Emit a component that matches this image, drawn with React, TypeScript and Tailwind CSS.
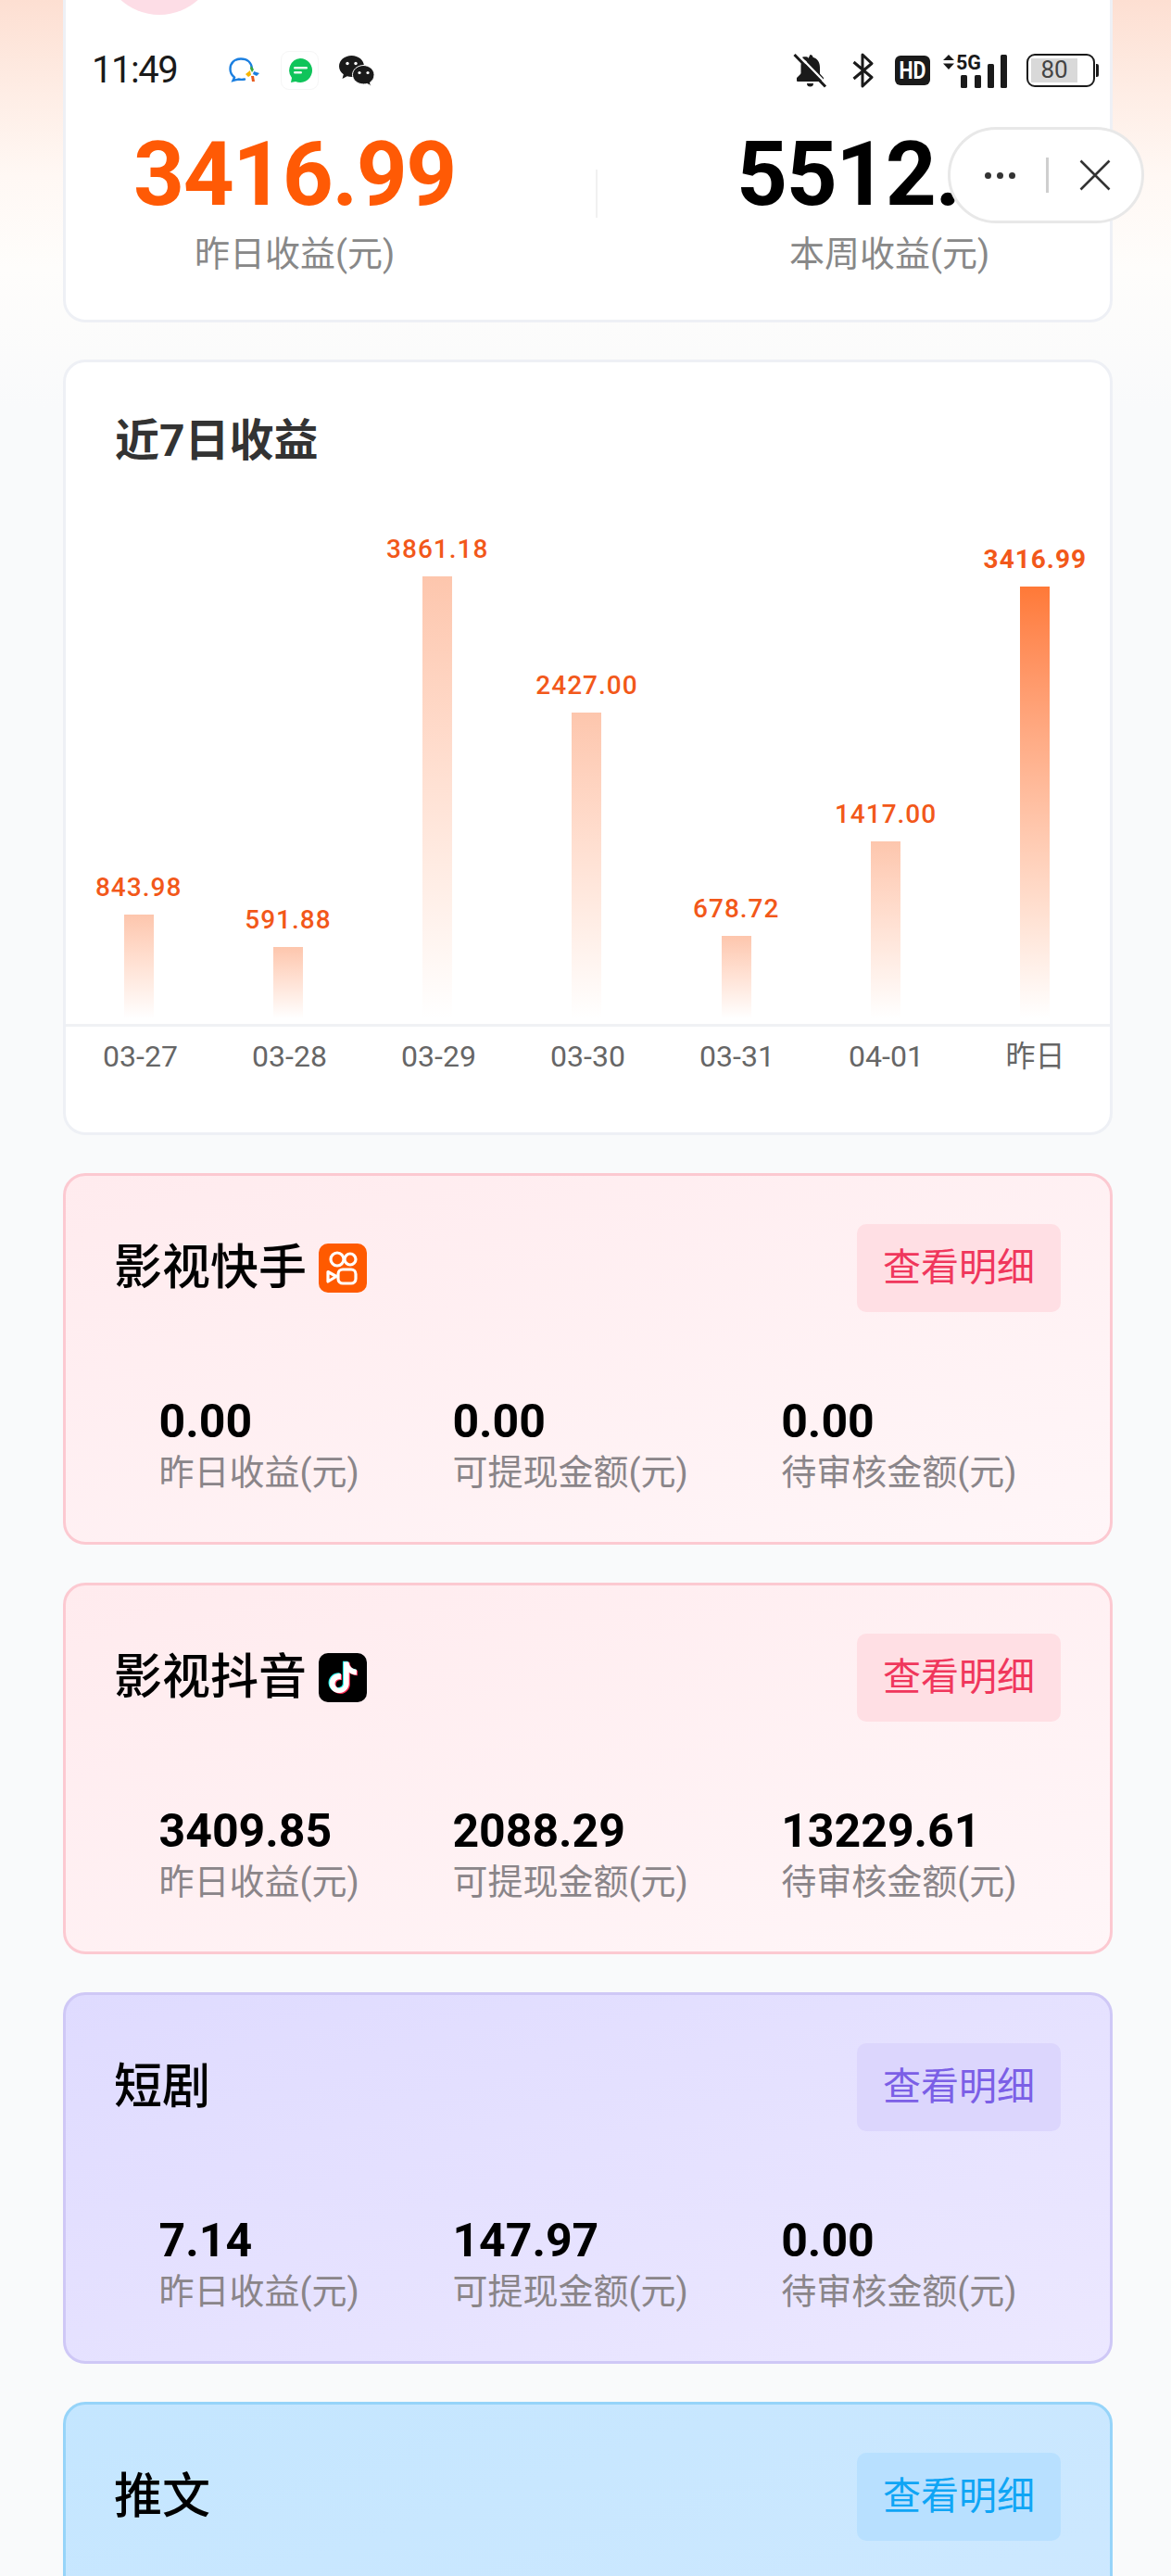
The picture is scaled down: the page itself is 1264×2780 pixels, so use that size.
const bars = [
  { value: "843.98", day: "03-27", height: 112 },
  { value: "591.88", day: "03-28", height: 77 },
  { value: "3861.18", day: "03-29", height: 477 },
  { value: "2427.00", day: "03-30", height: 330 },
  { value: "678.72", day: "03-31", height: 89 },
  { value: "1417.00", day: "04-01", height: 191 },
  { value: "3416.99", day: "昨日", height: 466, active: true },
];

const TIKTOK_PATH =
  "M12.525.02c1.31-.02 2.61-.01 3.91-.02.08 1.53.63 3.09 1.75 4.17 1.12 1.11 2.7 1.62 4.24 1.79v4.03c-1.44-.05-2.89-.35-4.2-.97-.57-.26-1.1-.59-1.62-.93-.01 2.92.01 5.84-.02 8.75-.08 1.4-.54 2.79-1.35 3.94-1.31 1.92-3.58 3.17-5.91 3.21-1.43.08-2.86-.31-4.08-1.03-2.02-1.19-3.44-3.37-3.65-5.71-.02-.5-.03-1-.01-1.49.18-1.9 1.12-3.72 2.58-4.96 1.66-1.44 3.98-2.13 6.15-1.72.02 1.48-.04 2.96-.04 4.44-.99-.32-2.15-.23-3.02.37-.63.41-1.11 1.04-1.36 1.75-.21.51-.15 1.07-.14 1.61.24 1.64 1.82 3.02 3.5 2.87 1.12-.01 2.19-.66 2.77-1.61.19-.33.4-.67.41-1.06.1-1.79.06-3.57.07-5.36.01-4.03-.01-8.05.02-12.07z";

function KuaishouIcon() {
  return (
    <svg width="52" height="53" viewBox="0 0 52 53" className="shrink-0">
      <rect width="52" height="53" rx="10" fill="#ff5a00" />
      <g fill="none" stroke="#fff" strokeWidth="3.2" strokeLinejoin="round">
        <circle cx="20" cy="17" r="7" />
        <circle cx="34" cy="17" r="6" />
        <rect x="21" y="28" width="19" height="15" rx="5" />
        <path d="M10 30.500 19 35.500 10 41Z" />
      </g>
    </svg>
  );
}

function TiktokIcon() {
  return (
    <svg width="52" height="53" viewBox="0 0 52 53" className="shrink-0">
      <rect width="52" height="53" rx="10" fill="#000" />
      <g transform="translate(9.500 9.500) scale(1.4)">
        <path d={TIKTOK_PATH} fill="#25f4ee" transform="translate(-0.8 -0.5)" />
        <path d={TIKTOK_PATH} fill="#fe2c55" transform="translate(0.8 0.6)" />
        <path d={TIKTOK_PATH} fill="#fff" />
      </g>
    </svg>
  );
}

function WecomIcon() {
  return (
    <svg width="34" height="28" viewBox="0 0 34 28" className="shrink-0">
      <path
        d="M25 12C24.500 5.500 20 1.500 13 1.500S1.500 6 1.500 12.500C1.500 16.500 3.500 19.500 6 21.500L4.500 25 10.500 23.500C12.500 24 15 24 17 23.500"
        fill="none"
        stroke="#1b7fe0"
        strokeWidth="2.4"
        strokeLinecap="round"
      />
      <path d="M18 18 23 14 24 19 21 21Z" fill="#f7b500" />
      <path d="M24 9 27 13 25 16 23 12Z" fill="#3aa93a" />
      <path d="M27 15 33 17 30 20 26 18Z" fill="#1b7fe0" />
      <path d="M24 20 27 20 28 26 25 26Z" fill="#e8591c" />
    </svg>
  );
}

function GreenChatIcon() {
  return (
    <div className="w-[41px] h-[42px] rounded-[9px] border border-[#f6f6f6] flex items-center justify-center shrink-0">
      <svg width="30" height="30" viewBox="0 0 30 30">
        <path d="M15 2a13 13 0 1 1-5 25l-5 1 1-5A13 13 0 0 1 15 2Z" fill="#0fc45a" />
        <rect x="8" y="11" width="15" height="2.400" rx="1.200" fill="#fff" opacity="0.9" />
        <rect x="8" y="16" width="9" height="2.400" rx="1.200" fill="#fff" opacity="0.9" />
      </svg>
    </div>
  );
}

function WechatIcon() {
  return (
    <svg width="39" height="33" viewBox="0 0 39 33" className="shrink-0">
      <path d="M13.500 0C6 0 0 5 0 11.500c0 3.600 1.900 6.700 4.800 8.800L3.500 25l5.200-2.700c1.500.4 3.100.6 4.800.6 7.500 0 13.500-5 13.500-11.400S21 0 13.500 0Z" fill="#1a1a1a" />
      <circle cx="9" cy="8.500" r="1.700" fill="#fff" />
      <circle cx="18" cy="8.500" r="1.700" fill="#fff" />
      <path d="M26.500 10.500C20 10.500 14.500 15 14.500 20.700s5.500 10.200 12 10.200c1.300 0 2.600-.2 3.800-.5l4.200 2.300-1-3.800c2.900-1.900 4.500-4.800 4.500-8.200 0-5.700-5.500-10.200-12-10.200Z" fill="#1a1a1a" stroke="#fff" strokeWidth="1" />
      <circle cx="22" cy="18.500" r="1.600" fill="#fff" />
      <circle cx="31" cy="18.500" r="1.600" fill="#fff" />
    </svg>
  );
}

function BellOffIcon() {
  return (
    <svg width="37" height="38" viewBox="0 0 37 38" className="shrink-0">
      <path d="M18.500 2c1.700 0 3 1.200 3 2.800 5 1.500 7.500 5.700 7.500 11v6.700l4 4.500v3H4v-3l4.500-4.500V14c0-1 .1-2 .4-3L29 31H4Z" fill="#1a1a1a" />
      <path d="M9 5.500C10.500 4.500 12 4 15.500 4.500L29 19" fill="#1a1a1a" />
      <path d="M15 33h7a3.500 3.500 0 0 1-7 0Z" fill="#1a1a1a" />
      <path d="M5 1.500 37 34.500" stroke="#fff" strokeWidth="2.500" />
      <path d="M1.500 2 35 36.500" stroke="#1a1a1a" strokeWidth="3" />
    </svg>
  );
}

function BluetoothIcon() {
  return (
    <svg width="24" height="38" viewBox="0 0 24 38" className="shrink-0">
      <path d="M1.500 10 21 26.500 11 36V2l10 9.500L1.500 28" fill="none" stroke="#1a1a1a" strokeWidth="3" strokeLinejoin="round" />
    </svg>
  );
}

function HdIcon() {
  return (
    <svg width="38" height="32" viewBox="0 0 38 32" className="shrink-0">
      <rect width="38" height="32" rx="6" fill="#1a1a1a" />
      <text x="4.500" y="25" fontSize="25" fontWeight="700" fill="#fff" fontFamily="Roboto" textLength="29" lengthAdjust="spacingAndGlyphs">
        HD
      </text>
    </svg>
  );
}

function SignalIcon() {
  return (
    <svg width="70" height="37" viewBox="0 0 70 37" className="shrink-0">
      <path d="M6 1 12 7H0ZM6 17 0 10.500H12Z" fill="#1a1a1a" />
      <text x="14" y="17" fontSize="22" fontWeight="700" fill="#1a1a1a" fontFamily="Roboto" textLength="27" lengthAdjust="spacingAndGlyphs">
        5G
      </text>
      <rect x="19" y="23" width="7" height="14" rx="1.500" fill="#1a1a1a" />
      <rect x="34" y="23" width="7" height="14" rx="1.500" fill="#1a1a1a" />
      <rect x="48" y="11" width="7" height="26" rx="1.500" fill="#1a1a1a" />
      <rect x="62" y="1" width="7" height="36" rx="1.500" fill="#1a1a1a" />
    </svg>
  );
}

function Battery() {
  return (
    <div className="flex items-center shrink-0">
      <div className="w-[74px] h-[36px] rounded-[9px] border-[2.5px] border-[#1a1a1a] p-[3px]">
        <div className="w-[50px] h-full bg-[#d9d9d9] text-center text-[#444] text-[26px] leading-[25px]">80</div>
      </div>
      <div className="ml-[1px] w-[3px] h-[14px] rounded-r-[2px] bg-[#1a1a1a]" />
    </div>
  );
}

function StatusBar() {
  return (
    <div className="absolute left-0 top-[51px] w-full h-[50px] pl-[99px] pr-[78px] flex items-center justify-between">
      <div className="flex items-center">
        <span className="w-[94px] text-[40px] leading-[50px] text-[#1a1a1a] tracking-[-1.5px]">11:49</span>
        <div className="ml-[54px] flex items-center gap-[22px]">
          <WecomIcon />
          <GreenChatIcon />
          <WechatIcon />
        </div>
      </div>
      <div className="flex items-center">
        <BellOffIcon />
        <div className="ml-[27px]">
          <BluetoothIcon />
        </div>
        <div className="ml-[22px]">
          <HdIcon />
        </div>
        <div className="ml-[14px]">
          <SignalIcon />
        </div>
        <div className="ml-[20px]">
          <Battery />
        </div>
      </div>
    </div>
  );
}

function Capsule() {
  return (
    <div className="absolute left-[1023px] top-[137px] w-[212px] h-[104px] rounded-full bg-white border-[3px] border-[#e8e8e8] flex items-center">
      <div className="w-[103px] flex justify-center gap-[6px] pl-[4px]">
        <span className="w-[7px] h-[7px] rounded-full bg-[#333]" />
        <span className="w-[7px] h-[7px] rounded-full bg-[#333]" />
        <span className="w-[7px] h-[7px] rounded-full bg-[#333]" />
      </div>
      <div className="w-[3px] h-[38px] bg-[#cfcfcf]" />
      <div className="flex-1 flex justify-center">
        <svg width="34" height="34" viewBox="0 0 34 34">
          <path d="M1.500 1.500 32.500 32.500M32.500 1.500 1.500 32.500" stroke="#333" strokeWidth="2.500" />
        </svg>
      </div>
    </div>
  );
}

function SummaryCard() {
  return (
    <section className="-mt-[140px] h-[488px] rounded-[24px] border-[3px] border-[#eef0f5] bg-white pt-[29px]">
      <div className="ml-[39px] w-[124px] h-[124px] rounded-full bg-[#fddde6]" />
      <div className="mt-[124px] ml-[47px] flex items-start">
        <div className="w-[400px] text-center">
          <div className="text-[96px] leading-[96px] font-bold tracking-[-1.5px] text-[#ff5a05]">3416.99</div>
          <div className="mt-[13px] text-[38px] leading-[50px] text-[#888]">昨日收益(元)</div>
        </div>
        <div className="ml-[125px] mt-[43px] w-[2px] h-[52px] bg-[#f1f1f1]" />
        <div className="ml-[115px] w-[400px] text-center">
          {/* last digits sit under the capsule */}
          <div className="pl-[18px] text-[96px] leading-[96px] font-bold tracking-[-1.5px] text-black">5512.77</div>
          <div className="mt-[13px] text-[38px] leading-[50px] text-[#888]">本周收益(元)</div>
        </div>
      </div>
    </section>
  );
}

function ChartCard() {
  return (
    <section className="mt-[40px] h-[837px] rounded-[24px] border-[3px] border-[#eef0f5] bg-white">
      <h2 className="mt-[55px] ml-[53px] text-[48px] leading-[60px] font-bold text-[#333]">近7日收益</h2>
      <div className="mt-[83px] -ml-[2px] h-[510px] flex items-end">
        {bars.map((b) => (
          <div key={b.day} className="flex-1 flex flex-col items-center">
            <span className={`mb-[12px] text-[28px] leading-[34px] tracking-[1px] text-[#f2581a] ${b.active ? "font-bold" : "font-medium"}`}>
              {b.value}
            </span>
            <div
              className={`w-[32px] bg-gradient-to-b ${b.active ? "from-[#ff7937]" : "from-[#fdc6ad]"} to-white`}
              style={{ height: b.height }}
            />
          </div>
        ))}
      </div>
      <div className="mt-[6px] border-t-[3px] border-[#f0f1f4] flex">
        {bars.map((b) => (
          <div key={b.day} className="flex-1 text-center text-[32px] leading-[64px] text-[#666]">
            {b.day}
          </div>
        ))}
      </div>
    </section>
  );
}

type Tone = { card: string; button: string };

const pink: Tone = {
  card: "border-[#fcc9d1] from-[#ffebee] to-[#fff6f8]",
  button: "bg-[#ffdfe4] text-[#f0375c]",
};
const purple: Tone = {
  card: "border-[#cfc8f6] from-[#dfdbff] to-[#ece8ff]",
  button: "bg-[#dcd6fd] text-[#7b5fe6]",
};
const blue: Tone = {
  card: "border-[#96d4f9] from-[#c4e6ff] to-[#d0e9ff]",
  button: "bg-[#b8e0ff] text-[#0fa5f5]",
};

function Stat({ value, label }: { value: string; label: string }) {
  return (
    <div>
      <div className="text-[50px] leading-[56px] font-bold text-black">{value}</div>
      <div className="text-[38px] leading-[54px] text-[#8a8589]">{label}</div>
    </div>
  );
}

function ProductCard({
  title,
  icon,
  tone,
  values,
}: {
  title: string;
  icon?: React.ReactNode;
  tone: Tone;
  values?: string[];
}) {
  return (
    <section className={`mt-[41px] h-[401px] rounded-[24px] border-[3px] bg-gradient-to-br pt-[52px] ${tone.card}`}>
      <div className="pl-[52px] pr-[53px] flex items-center justify-between">
        <div className="flex items-center gap-[13px]">
          <h3 className="text-[52px] leading-[60px] font-medium text-black">{title}</h3>
          {icon}
        </div>
        <button className={`w-[220px] h-[95px] rounded-[10px] text-[41px] ${tone.button}`}>查看明细</button>
      </div>
      {values && (
        <div className="mt-[90px] flex justify-evenly">
          <Stat value={values[0]} label="昨日收益(元)" />
          <Stat value={values[1]} label="可提现金额(元)" />
          <Stat value={values[2]} label="待审核金额(元)" />
        </div>
      )}
    </section>
  );
}

export default function App() {
  return (
    <div className="relative w-[1264px] h-[2780px] overflow-hidden font-['Roboto','Noto_Sans_CJK_SC',sans-serif] bg-[linear-gradient(180deg,#fddfd2_0,#feede5_100px,#fff8f4_190px,#fefdfb_290px,#f9fafb_440px)]">
      <div className="pl-[68px] pr-[63px]">
        <SummaryCard />
        <ChartCard />
        <ProductCard title="影视快手" icon={<KuaishouIcon />} tone={pink} values={["0.00", "0.00", "0.00"]} />
        <ProductCard title="影视抖音" icon={<TiktokIcon />} tone={pink} values={["3409.85", "2088.29", "13229.61"]} />
        <ProductCard title="短剧" tone={purple} values={["7.14", "147.97", "0.00"]} />
        <ProductCard title="推文" tone={blue} />
      </div>
      <StatusBar />
      <Capsule />
    </div>
  );
}
